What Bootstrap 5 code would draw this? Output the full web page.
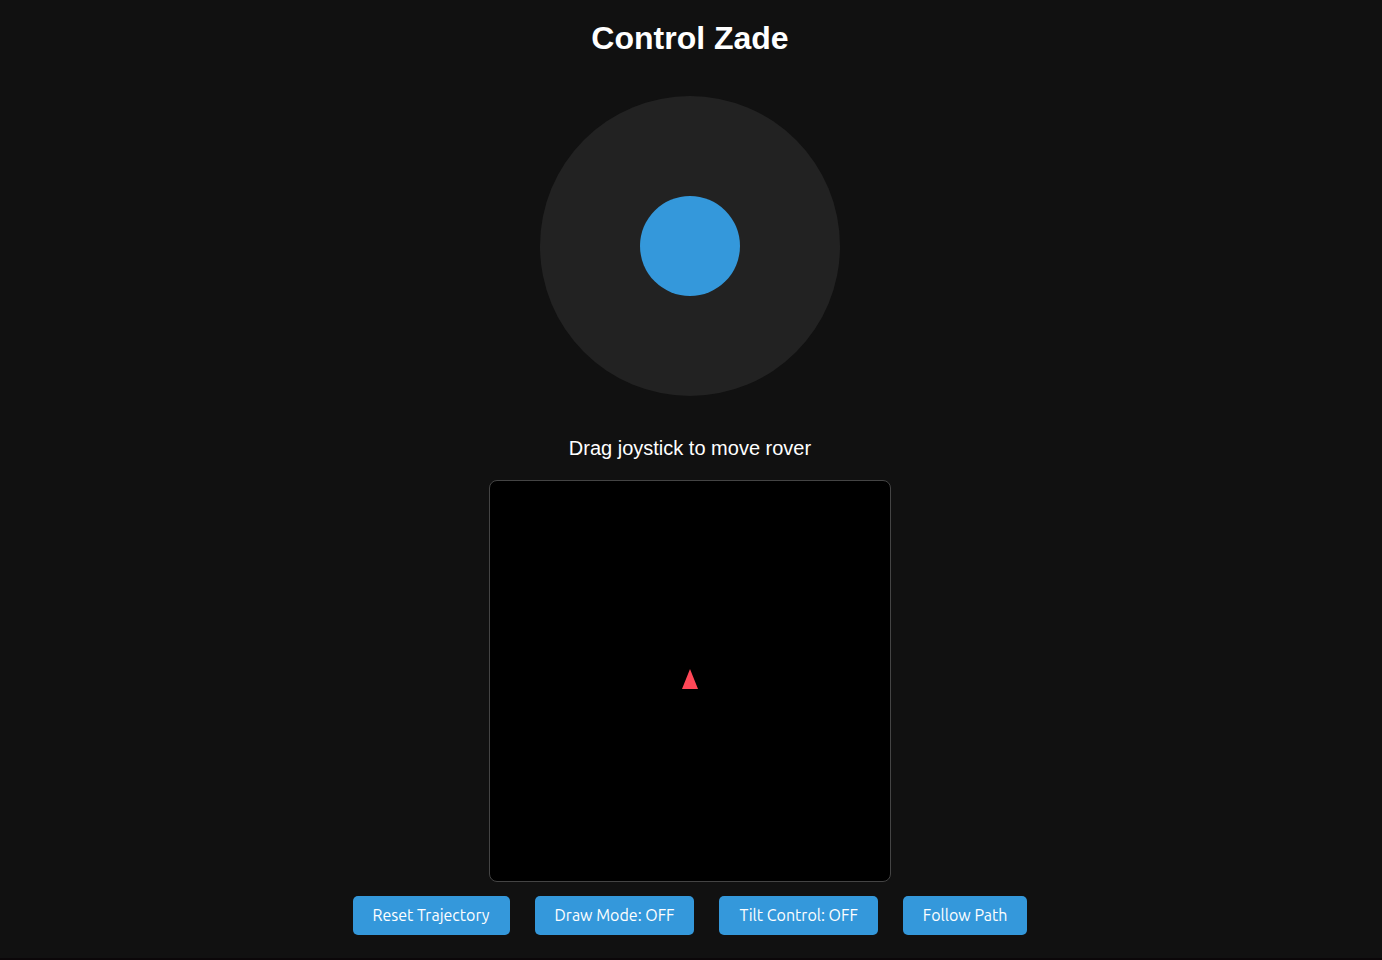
<!DOCTYPE html>
<html lang="en">
<head>
<meta charset="utf-8">
<meta name="viewport" content="width=device-width, initial-scale=1">
<title>Control Zade</title>
<link href="https://cdn.jsdelivr.net/npm/bootstrap@5.3.0/dist/css/bootstrap.min.css" rel="stylesheet">
<style>
  body { background: #111; color: #fff; font-family: "Liberation Sans", Arial, sans-serif; }
  .control-page { padding: 20px 2px 0 0; border-bottom: 2px solid #0b0709; }
  .page-title { font-size: 32px; line-height: 36px; font-weight: 700; margin-bottom: 40px; }
  .joystick { width: 300px; height: 300px; background: #222; }
  .joystick-knob { width: 100px; height: 100px; background: #3498db; }
  .status-text { font-size: 20px; line-height: 24px; margin: 40px 0 20px; }
  .track-map { width: 402px; height: 402px; background: #000; border: 1px solid #444; border-radius: 8px; }
  .control-bar { gap: 14px 25px; margin-top: 14px; }
  .btn-control {
    --bs-btn-color: #fff; --bs-btn-bg: #3498db; --bs-btn-border-color: #3498db;
    --bs-btn-hover-color: #fff; --bs-btn-hover-bg: #2c83bd; --bs-btn-hover-border-color: #2c83bd;
    --bs-btn-active-color: #fff; --bs-btn-active-bg: #2675a9; --bs-btn-active-border-color: #2675a9;
    --bs-btn-border-width: 0; --bs-btn-border-radius: 5px;
    --bs-btn-padding-x: 20px; --bs-btn-padding-y: 10px;
    --bs-btn-font-size: 16px; --bs-btn-line-height: 19px;
    font-family: Ubuntu, "Noto Sans", sans-serif;
  }
</style>
</head>
<body>
<main class="control-page min-vh-100 d-flex flex-column align-items-center text-center">
  <h1 class="page-title">Control Zade</h1>
  <div class="joystick rounded-circle d-flex align-items-center justify-content-center">
    <div class="joystick-knob rounded-circle"></div>
  </div>
  <p class="status-text">Drag joystick to move rover</p>
  <svg class="track-map" viewBox="0 0 400 400" role="img" aria-label="Rover position">
    <path d="M200 188 L208 208 H192 Z" fill="#ff4757"/>
  </svg>
  <div class="control-bar d-flex flex-wrap justify-content-center">
    <button type="button" class="btn btn-control">Reset Trajectory</button>
    <button type="button" class="btn btn-control">Draw Mode: OFF</button>
    <button type="button" class="btn btn-control">Tilt Control: OFF</button>
    <button type="button" class="btn btn-control">Follow Path</button>
  </div>
</main>
<script src="https://cdn.jsdelivr.net/npm/bootstrap@5.3.0/dist/js/bootstrap.bundle.min.js"></script>
</body>
</html>
